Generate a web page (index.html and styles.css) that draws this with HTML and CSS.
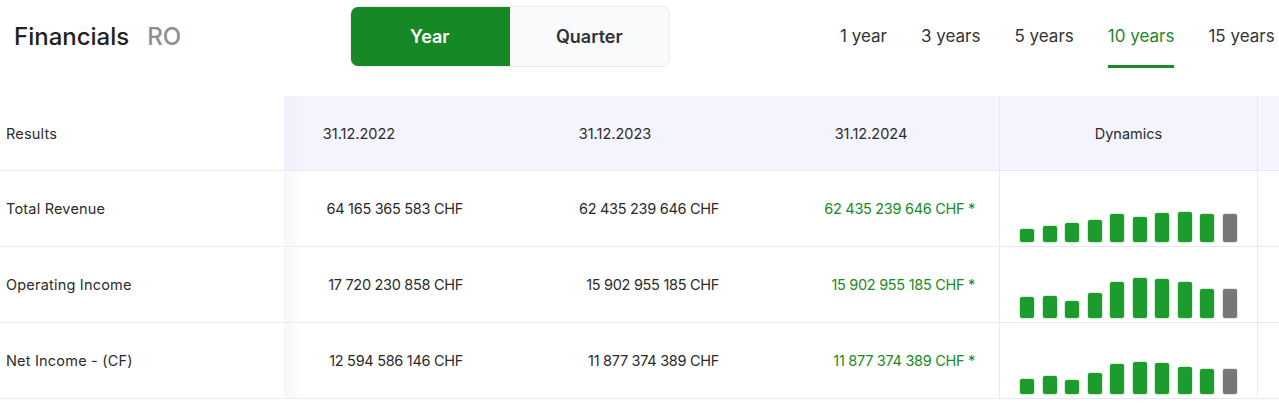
FILE: index.html
```html
<!DOCTYPE html>
<html lang="en">
<head>
    <meta charset="UTF-8">
    <meta name="viewport" content="width=device-width, initial-scale=1.0">
    <title>Financials RO</title>
    <link rel="stylesheet" href="styles.css">
</head>
<body>

<div class="top">
    <div class="title">
        <h1>Financials</h1>
        <span class="ticker">RO</span>
    </div>
    <div class="toggle">
        <button class="active">Year</button>
        <button>Quarter</button>
    </div>
    <div class="periods">
        <span class="period">1 year</span>
        <span class="period">3 years</span>
        <span class="period">5 years</span>
        <span class="period current">10 years</span>
        <span class="period">15 years</span>
    </div>
</div>

<div class="table">
    <div class="cell label head">Results</div>
    <div class="cell date first">31.12.2022</div>
    <div class="cell date">31.12.2023</div>
    <div class="cell date">31.12.2024</div>
    <div class="cell dyn head-dyn">Dynamics</div>
    <div class="cell rest head-rest"></div>

    <div class="cell label">Total Revenue</div>
    <div class="cell num">64 165 365 583 CHF</div>
    <div class="cell num">62 435 239 646 CHF</div>
    <div class="cell num green">62 435 239 646 CHF *</div>
    <div class="cell dyn bars">
        <i style="height:13px"></i><i style="height:16px"></i><i style="height:19px"></i><i style="height:22px"></i><i style="height:28px"></i>
        <i style="height:25px"></i><i style="height:29px"></i><i style="height:30px"></i><i style="height:28px"></i><i class="last" style="height:28px"></i>
    </div>
    <div class="cell rest"></div>

    <div class="cell label">Operating Income</div>
    <div class="cell num">17 720 230 858 CHF</div>
    <div class="cell num">15 902 955 185 CHF</div>
    <div class="cell num green">15 902 955 185 CHF *</div>
    <div class="cell dyn bars">
        <i style="height:21px"></i><i style="height:22px"></i><i style="height:17px"></i><i style="height:25px"></i><i style="height:36px"></i>
        <i style="height:40px"></i><i style="height:39px"></i><i style="height:36px"></i><i style="height:29px"></i><i class="last" style="height:29px"></i>
    </div>
    <div class="cell rest"></div>

    <div class="cell label">Net Income - (CF)</div>
    <div class="cell num">12 594 586 146 CHF</div>
    <div class="cell num">11 877 374 389 CHF</div>
    <div class="cell num green">11 877 374 389 CHF *</div>
    <div class="cell dyn bars">
        <i style="height:15px"></i><i style="height:18px"></i><i style="height:14px"></i><i style="height:21px"></i><i style="height:30px"></i>
        <i style="height:32px"></i><i style="height:31px"></i><i style="height:27px"></i><i style="height:25px"></i><i class="last" style="height:25px"></i>
    </div>
    <div class="cell rest"></div>
</div>

</body>
</html>
```

FILE: styles.css
```css
body {
    margin: 0;
    font-family: Inter, "Liberation Sans", sans-serif;
    color: #2b2b2b;
    background: #fff;
    overflow: hidden;
}
.top {
    display: flex;
    align-items: flex-start;
    height: 96px;
    padding: 6px 0 0 14px;
    box-sizing: border-box;
}
.title {
    width: 336px;
    height: 61px;
    display: flex;
    align-items: center;
    gap: 18px;
}
.title h1 {
    margin: 0;
    font-size: 24px;
    font-weight: 500;
    color: #222;
}
.ticker {
    font-size: 24px;
    font-weight: 500;
    color: #8e8e93;
}
.toggle {
    display: flex;
    width: 320px;
    height: 61px;
    border: 1px solid #e9edf2;
    border-radius: 8px;
    background: #f8fafc;
    box-sizing: border-box;
    overflow: hidden;
}
.toggle button {
    flex: 1;
    border: none;
    background: none;
    font-family: inherit;
    font-size: 18px;
    font-weight: 600;
    color: #333;
    cursor: pointer;
}
.toggle button.active {
    background: #178826;
    color: #fff;
    margin: -1px 0 -1px -1px;
}
.periods {
    display: flex;
    gap: 34px;
    margin-left: 170px;
}
.period {
    padding: 20px 0 19px;
    line-height: 20px;
    font-size: 17px;
    color: #333;
    border-bottom: 3px solid transparent;
}
.period.current {
    color: #1a8a28;
    border-bottom-color: #1a8a28;
}

.table {
    display: grid;
    grid-template-columns: 284px 203px 256px 256px 258px 22px;
    grid-template-rows: 75px 76px 76px 76px;
    font-size: 14.5px;
}
.cell {
    display: flex;
    align-items: center;
    border-bottom: 1px solid #ececec;
    box-sizing: border-box;
}
.label {
    padding-left: 6px;
    position: relative;
    background: #fff;
    letter-spacing: 0.2px;
}
.label::after {
    content: "";
    position: absolute;
    top: 0;
    bottom: -1px;
    left: 100%;
    width: 20px;
    background: linear-gradient(to right, rgba(232, 234, 248, 0.4), rgba(240, 241, 252, 0));
    z-index: 1;
}
.date {
    justify-content: center;
    background: #f3f4fd;
}
.date.first {
    padding-right: 53px;
}
.num {
    justify-content: flex-end;
    padding-right: 24px;
    letter-spacing: -0.3px;
}
.green {
    color: #1a8a24;
}
.dyn {
    border-left: 1px solid #e6e9f5;
    border-bottom-color: #e3e8f8;
}
.rest {
    border-left: 1px solid #e6e9f5;
    border-bottom-color: #e3e8f8;
}
.head-dyn {
    justify-content: center;
    background: #f3f4fd;
}
.head-rest {
    background: #f3f4fd;
}
.bars {
    align-items: flex-end;
    gap: 8.5px;
    padding: 0 0 4px 20px;
}
.bars i {
    display: block;
    width: 14px;
    background: #1c9c2c;
    border-radius: 2px;
    box-shadow: 0 0 0 0.5px rgba(120, 200, 130, 0.6);
}
.bars i.last {
    background: #777;
    box-shadow: 0 0 0 0.5px rgba(170, 170, 170, 0.6);
}
```
